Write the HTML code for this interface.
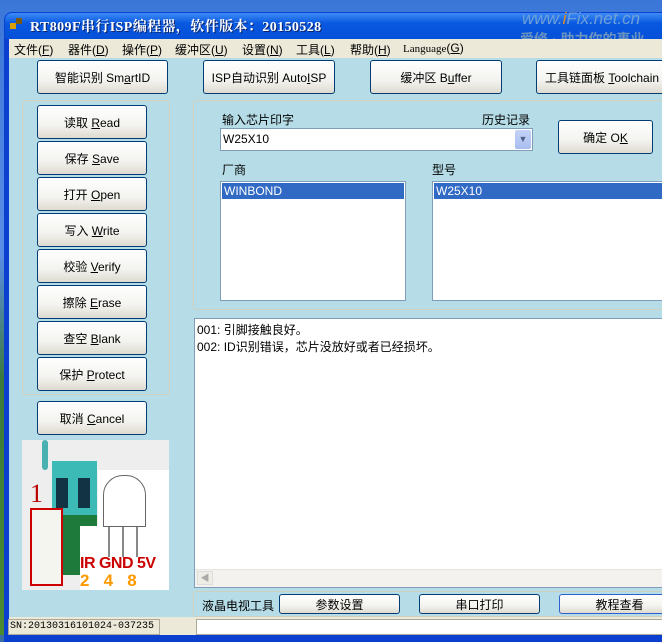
<!DOCTYPE html>
<html><head><meta charset="utf-8"><style>
*{margin:0;padding:0;box-sizing:border-box}
body{width:662px;height:635px;overflow:hidden;position:relative;background:#3a6ea5;font-family:"Liberation Sans","Noto Sans CJK SC",sans-serif;font-size:12px;color:#000}
.a{position:absolute}
.btn{position:absolute;background:linear-gradient(#fff,#f3f3ef 60%,#dedbd0);border:1px solid #003c74;border-radius:3px;text-align:center;font-size:12px;display:flex;align-items:center;justify-content:center;white-space:pre}
.grp{position:absolute;border:1px solid #d0d0bf;border-radius:3px}
.list{position:absolute;background:#fff;border:1px solid #7f9db9}
.sel{background:#316ac5;color:#fff;height:16px;line-height:16px;padding-left:2px;font-size:12px}
u{text-decoration:underline}
.m{position:absolute;top:41px;white-space:nowrap}
</style></head><body>
<div class="a" style="left:0;top:0;width:662px;height:635px;background:linear-gradient(180deg,#3b77d8 0,#5a8ee6 40%,#3b7a3a 60%,#4c8b2f 100%)"></div>
<div class="a" style="left:4px;top:12px;width:670px;height:630px;background:#0a3fd0;border-radius:8px 8px 0 0"></div>
<div class="a" style="left:5px;top:13px;width:670px;height:26px;background:linear-gradient(#3d8cf5,#0858e0 40%,#0550d8);border-radius:7px 7px 0 0"></div>
<div class="a" style="left:10px;top:17px;width:14px;height:14px"><div class="a" style="left:0;top:6px;width:6px;height:6px;background:#d9a000"></div><div class="a" style="left:6px;top:1px;width:6px;height:6px;background:#7a5a10"></div></div>
<div class="a" style="left:30px;top:16px;color:#fff;font-family:'Liberation Serif','Noto Serif CJK SC',serif;font-weight:bold;font-size:14px;letter-spacing:0.4px;text-shadow:1px 1px #0a246a;white-space:nowrap">RT809F串行ISP编程器，软件版本：20150528</div>
<div class="a" style="left:522px;top:9px;color:#6fa0d8;font-style:italic;font-size:17px">www.<span style="color:#e88a20">i</span>Fix.net.cn</div>
<div class="a" style="left:520px;top:29px;color:#6a93c0;font-size:14px;font-weight:bold">爱修 · 助力你的事业</div>
<div class="a" style="left:9px;top:39px;width:660px;height:19px;background:#ece9d8"></div>
<div class="m" style="left:14px">文件(<u>F</u>)</div>
<div class="m" style="left:68px">器件(<u>D</u>)</div>
<div class="m" style="left:122px">操作(<u>P</u>)</div>
<div class="m" style="left:175px">缓冲区(<u>U</u>)</div>
<div class="m" style="left:242px">设置(<u>N</u>)</div>
<div class="m" style="left:296px">工具(<u>L</u>)</div>
<div class="m" style="left:350px">帮助(<u>H</u>)</div>
<div class="m" style="left:403px"><span style="font-size:11px;font-family:'Liberation Serif',serif">Language</span>(<u>G</u>)</div>
<div class="a" style="left:9px;top:58px;width:660px;height:560px;background:#b6dde7"></div>
<div class="btn" style="left:37px;top:60px;width:131px;height:34px"><span>智能识别 Sm<u>a</u>rtID</span></div>
<div class="btn" style="left:203px;top:60px;width:132px;height:34px"><span>ISP自动识别 Auto<u>I</u>SP</span></div>
<div class="btn" style="left:370px;top:60px;width:132px;height:34px"><span>缓冲区 B<u>u</u>ffer</span></div>
<div class="btn" style="left:536px;top:60px;width:140px;height:34px;justify-content:flex-start;padding-left:8px"><span>工具链面板 <u>T</u>oolchain</span></div>
<div class="grp" style="left:22px;top:100px;width:148px;height:295px"></div>
<div class="btn" style="left:37px;top:105px;width:110px;height:34px"><span>读取 <u>R</u>ead</span></div>
<div class="btn" style="left:37px;top:141px;width:110px;height:34px"><span>保存 <u>S</u>ave</span></div>
<div class="btn" style="left:37px;top:177px;width:110px;height:34px"><span>打开 <u>O</u>pen</span></div>
<div class="btn" style="left:37px;top:213px;width:110px;height:34px"><span>写入 <u>W</u>rite</span></div>
<div class="btn" style="left:37px;top:249px;width:110px;height:34px"><span>校验 <u>V</u>erify</span></div>
<div class="btn" style="left:37px;top:285px;width:110px;height:34px"><span>擦除 <u>E</u>rase</span></div>
<div class="btn" style="left:37px;top:321px;width:110px;height:34px"><span>查空 <u>B</u>lank</span></div>
<div class="btn" style="left:37px;top:357px;width:110px;height:34px"><span>保护 <u>P</u>rotect</span></div>
<div class="btn" style="left:37px;top:401px;width:110px;height:34px"><span>取消 <u>C</u>ancel</span></div>
<!-- image -->
<div class="a" style="left:22px;top:440px;width:147px;height:150px;background:#eee"></div>
<div class="a" style="left:42px;top:440px;width:6px;height:30px;background:#4ab0b0;border-radius:3px"></div>
<div class="a" style="left:52px;top:461px;width:45px;height:75px;background:#3cbab6"></div>
<div class="a" style="left:56px;top:478px;width:12px;height:30px;background:#134"></div>
<div class="a" style="left:78px;top:478px;width:12px;height:30px;background:#134"></div>
<div class="a" style="left:62px;top:515px;width:35px;height:60px;background:#1e7a3a"></div>
<div class="a" style="left:98px;top:470px;width:71px;height:120px;background:#fff"></div>
<div class="a" style="left:103px;top:475px;width:43px;height:52px;border:1px solid #666;border-radius:20px 20px 0 0"></div>
<div class="a" style="left:108px;top:527px;width:2px;height:30px;background:#888"></div>
<div class="a" style="left:122px;top:527px;width:2px;height:30px;background:#888"></div>
<div class="a" style="left:136px;top:527px;width:2px;height:30px;background:#888"></div>
<div class="a" style="left:80px;top:526px;width:18px;height:64px;background:#fff"></div>
<div class="a" style="left:30px;top:508px;width:33px;height:78px;border:2px solid #c00;background:#f5f5f0"></div>
<div class="a" style="left:30px;top:479px;color:#b00;font-family:'Liberation Serif',serif;font-size:26px">1</div>
<div class="a" style="left:80px;top:555px;color:#c00;font-weight:bold;font-size:16px;letter-spacing:-0.5px">IR GND 5V</div>
<div class="a" style="left:80px;top:571px;color:#f90;font-weight:bold;font-size:17px;white-space:pre">2   4   8</div>
<!-- right -->
<div class="grp" style="left:193px;top:100px;width:480px;height:210px"></div>
<div class="a" style="left:222px;top:111px">输入芯片印字</div>
<div class="a" style="left:482px;top:111px">历史记录</div>
<div class="list" style="left:220px;top:128px;width:313px;height:23px"><span style="position:absolute;left:2px;top:3px">W25X10</span><div class="a" style="right:1px;top:1px;width:16px;height:19px;background:linear-gradient(#c6d3f7,#a8bdf0);border-radius:2px;color:#4d6185;font-size:9px;text-align:center;line-height:19px">▼</div></div>
<div class="btn" style="left:558px;top:120px;width:95px;height:34px"><span>确定 O<u>K</u></span></div>
<div class="a" style="left:222px;top:161px">厂商</div>
<div class="a" style="left:432px;top:161px">型号</div>
<div class="list" style="left:220px;top:181px;width:186px;height:120px;padding:1px"><div class="sel">WINBOND</div></div>
<div class="list" style="left:432px;top:181px;width:240px;height:120px;padding:1px"><div class="sel">W25X10</div></div>
<div class="a" style="left:194px;top:318px;width:480px;height:270px;background:#fff;border:1px solid #7f9db9"></div>
<div class="a" style="left:197px;top:322px;line-height:17px">001: 引脚接触良好。<br>002: ID识别错误，芯片没放好或者已经损坏。</div>
<div class="a" style="left:195px;top:569px;width:478px;height:18px;background:#f3f2ee;border-top:1px solid #e6e4dc"></div>
<div class="a" style="left:197px;top:571px;width:16px;height:14px;background:#eeede6;border:1px solid #ddd;color:#aaa;font-size:9px;text-align:center;line-height:12px">◀</div>
<div class="grp" style="left:193px;top:591px;width:480px;height:26px"></div>
<div class="a" style="left:202px;top:597px">液晶电视工具</div>
<div class="btn" style="left:279px;top:594px;width:121px;height:20px">参数设置</div>
<div class="btn" style="left:419px;top:594px;width:121px;height:20px">串口打印</div>
<div class="btn" style="left:559px;top:594px;width:121px;height:20px;border-color:#3060d0">教程查看</div>
<div class="a" style="left:9px;top:617px;width:660px;height:18px;background:#ece9d8"></div>
<div class="a" style="left:8px;top:619px;width:152px;height:16px;border:1px solid #aca899;font-family:'Liberation Mono',monospace;font-size:10px;padding-left:1px;line-height:14px;white-space:nowrap;overflow:hidden">SN:20130316101024-037235</div>
<div class="a" style="left:196px;top:619px;width:480px;height:16px;background:#fff;border:1px solid #aca899"></div>
</body></html>
